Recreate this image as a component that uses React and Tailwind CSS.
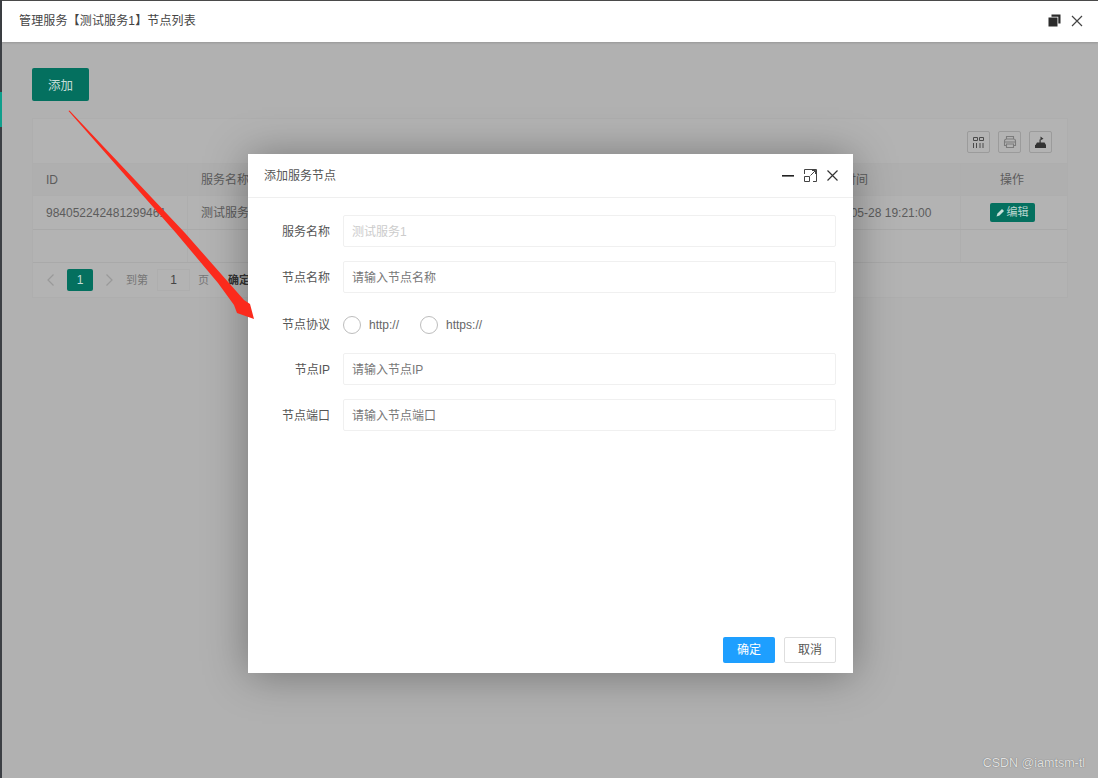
const FONT = "font-['Liberation_Sans','Noto_Sans_CJK_SC',sans-serif]";

function Cell({ w, children, className = "" }) {
  return (
    <div className={`${w} flex h-full items-center whitespace-nowrap border-r border-[#aeaeae] pl-[13px] text-[12px] text-[#5c5c5c] ${className}`}>
      {children}
    </div>
  );
}

function ToolBtn({ children }) {
  return (
    <div className="flex h-[22px] w-[23px] items-center justify-center rounded-[2px] border border-[#9b9b9b] text-[#4a4a4a]">
      {children}
    </div>
  );
}

function Field({ label, placeholder, disabled }) {
  return (
    <div className="flex h-[32px] items-center">
      <label className="w-[82px] pt-[2px] text-right text-[12px] text-[#555]">{label}</label>
      <div className={`ml-[13px] flex h-[32px] flex-1 items-center rounded-[2px] border border-[#f0f0f0] px-[8px] pt-[2px] text-[12px] ${disabled ? "text-[#cccccc]" : "text-[#777]"}`}>
        {placeholder}
      </div>
    </div>
  );
}

function Radio({ label }) {
  return (
    <div className="flex items-center gap-[8px]">
      <span className="h-[18px] w-[18px] rounded-full border-[1.5px] border-[#bdbdbd]" />
      <span className="text-[12px] text-[#666]">{label}</span>
    </div>
  );
}

export default function App() {
  return (
    <div className={`${FONT} relative flex h-[778px] w-[1098px] overflow-hidden bg-[#b1b1b1]`}>
      {/* left edge of the page behind */}
      <div className="flex w-[2px] flex-col bg-[#3c3f44]">
        <div className="mt-[92px] h-[35px] bg-[#0f9f8c]" />
      </div>

      <div className="flex min-w-0 flex-1 flex-col">
        {/* layer header */}
        <div className="flex h-[42px] items-center justify-between border-t border-[#4a4a4a] bg-white pb-[2px] pl-[17px] pr-[15px] shadow-[0_1px_2px_rgba(0,0,0,0.15)]">
          <span className="text-[12px] tracking-[0.15px] text-[#444]">管理服务【测试服务1】节点列表</span>
          <div className="flex items-center gap-[10px]">
            <svg width="13" height="13" viewBox="0 0 13 13">
              <path d="M3.5 0.5h9v9h-2.2v-6.8h-6.8z" fill="#2b2b2b" />
              <rect x="0.5" y="3.5" width="9" height="9" fill="#2b2b2b" />
            </svg>
            <svg width="12" height="12" viewBox="0 0 12 12" stroke="#444" strokeWidth="1.2" fill="none">
              <path d="M1 1l10 10M11 1L1 11" />
            </svg>
          </div>
        </div>

        {/* content */}
        <div className="flex flex-1 flex-col pl-[30px] pr-[30px] pt-[26px]">
          <button className="flex h-[33px] w-[57px] items-center justify-center rounded-[2px] bg-[#04705f] pt-[3px] text-[12.5px] text-[#c5ddd8]">
            添加
          </button>

          <div className="mt-[17px] h-[180px] border border-[#aeaeae] bg-[#b3b3b3]">
            <div className="flex h-[44px] items-end justify-end gap-[8px] pb-[10px] pr-[15px]">
              <ToolBtn>
                <svg width="13" height="13" viewBox="0 0 13 13" fill="none" stroke="currentColor" strokeWidth="1">
                  <path d="M1.5 1.5h4v3h-4zM7.5 1.5h4v3h-4zM1.5 7v5M4.5 7v5M8 7v5M11 7v5" />
                </svg>
              </ToolBtn>
              <ToolBtn>
                <svg width="14" height="14" viewBox="0 0 14 14" fill="none" stroke="#7c7c7c" strokeWidth="1.1">
                  <path d="M3.5 4V1.5h7V4M3.5 10.5H1.5V6a2 2 0 0 1 2-2h7a2 2 0 0 1 2 2v4.5h-2M1.5 7h11M3.5 9h7v3.5h-7z" />
                </svg>
              </ToolBtn>
              <ToolBtn>
                <svg width="13" height="13" viewBox="0 0 13 13" fill="#333">
                  <path d="M1 9h11v3H1zM3 6.5h7.5L12 9H1.5zM5.5 3.5h1.2v3H5.5zM6.5 0.5l3 2.2-3 1.6z" />
                </svg>
              </ToolBtn>
            </div>

            <div className="flex h-[33px] border-y border-[#aeaeae] bg-[#afafaf]">
              <Cell w="w-[155px]">ID</Cell>
              <Cell w="flex-1">服务名称</Cell>
              <Cell w="w-[160px]"><span className="pl-[6px]">更新时间</span></Cell>
              <div className="flex w-[106px] items-center justify-center pr-[4px] text-[12px] text-[#5c5c5c]">操作</div>
            </div>
            <div className="flex h-[34px] border-b border-[#a9a9a9]">
              <Cell w="w-[155px]">984052242481299461</Cell>
              <Cell w="flex-1">测试服务1</Cell>
              <Cell w="w-[160px]"><span className="pl-[6px]">2022-05-28 19:21:00</span></Cell>
              <div className="flex w-[106px] items-center justify-center pr-[4px]">
                <span className="flex h-[19px] w-[45px] items-center justify-center gap-[2px] rounded-[2px] bg-[#04705f] text-[11px] text-[#b9d6d0]">
                  <svg width="9" height="9" viewBox="0 0 9 9" fill="#c9e0db"><path d="M0.5 8.5l1-3 4.5-4.5 2 2-4.5 4.5z" /></svg>
                  编辑
                </span>
              </div>
            </div>
            <div className="flex h-[33px] border-b border-[#a9a9a9]">
              <div className="w-[155px] border-r border-[#aeaeae]" />
              <div className="flex-1 border-r border-[#aeaeae]" />
              <div className="w-[106px]" />
            </div>
            <div className="flex h-[34px] items-center pl-[13px] text-[11px] text-[#767676]">
              <svg width="9" height="14" viewBox="0 0 9 14" fill="none" stroke="#999" strokeWidth="1.2"><path d="M7.5 1.5L2 7l5.5 5.5" /></svg>
              <span className="ml-[12px] flex h-[22px] w-[26px] items-center justify-center rounded-[2px] bg-[#04705f] text-[12px] text-[#c5ddd8]">1</span>
              <svg className="ml-[12px]" width="9" height="14" viewBox="0 0 9 14" fill="none" stroke="#999" strokeWidth="1.2"><path d="M1.5 1.5L7 7l-5.5 5.5" /></svg>
              <span className="ml-[12px]">到第</span>
              <span className="ml-[9px] flex h-[22px] w-[33px] items-center justify-center border border-[#aeaeae] text-[12px] text-[#444]">1</span>
              <span className="ml-[8px]">页</span>
              <span className="ml-[19px] font-bold text-[#333]">确定</span>
            </div>
          </div>
        </div>
      </div>

      {/* dialog */}
      <div className="absolute left-[248px] top-[154px] flex h-[519px] w-[605px] flex-col bg-white shadow-[0_2px_40px_rgba(0,0,0,0.35)]">
        <div className="flex h-[44px] items-center justify-between border-b border-[#efefef] pl-[16px] pr-[15px]">
          <span className="text-[12px] text-[#555]">添加服务节点</span>
          <div className="flex items-center gap-[10px]">
            <svg width="12" height="12" viewBox="0 0 12 12"><rect x="0" y="5" width="12" height="1.6" fill="#222" /></svg>
            <svg width="13" height="13" viewBox="0 0 13 13" fill="none" stroke="#444" strokeWidth="1">
              <path d="M0.5 5V0.5h12v12H9M0.5 7.5h5v5h-5zM6.5 6.5l5-5M8 1.5h3.5V5" />
            </svg>
            <svg width="11" height="11" viewBox="0 0 11 11" stroke="#333" strokeWidth="1.2" fill="none"><path d="M0.5 0.5l10 10M10.5 0.5l-10 10" /></svg>
          </div>
        </div>

        <div className="flex flex-1 flex-col gap-[14px] pr-[17px] pt-[17px]">
          <Field label="服务名称" placeholder="测试服务1" disabled />
          <Field label="节点名称" placeholder="请输入节点名称" />
          <div className="flex h-[32px] items-center pt-[3px]">
            <label className="w-[82px] text-right text-[12px] text-[#555]">节点协议</label>
            <div className="ml-[13px] flex items-center gap-[21px]">
              <Radio label="http://" />
              <Radio label="https://" />
            </div>
          </div>
          <Field label="节点IP" placeholder="请输入节点IP" />
          <Field label="节点端口" placeholder="请输入节点端口" />
        </div>

        <div className="flex justify-end gap-[9px] pb-[10px] pr-[17px]">
          <button className="h-[26px] w-[52px] rounded-[2px] bg-[#1e9fff] text-[12px] text-white">确定</button>
          <button className="h-[26px] w-[52px] rounded-[2px] border border-[#dedede] bg-white text-[12px] text-[#555]">取消</button>
        </div>
      </div>

      {/* red annotation arrow */}
      <svg className="pointer-events-none absolute left-0 top-0" width="1098" height="778" viewBox="0 0 1098 778">
        <path d="M68.5 111 L69.5 110.5 L185 233 L229 283 L244 300 L250 304 L254 319 L237 313 L234 305 L218 283 L176 233 Z" fill="#fb2a1c" />
      </svg>

      <span className="absolute bottom-[5px] right-[13px] text-[12.5px] text-[#e2e2e2] [text-shadow:0_0_1px_#555]">CSDN @iamtsm-tl</span>
    </div>
  );
}
